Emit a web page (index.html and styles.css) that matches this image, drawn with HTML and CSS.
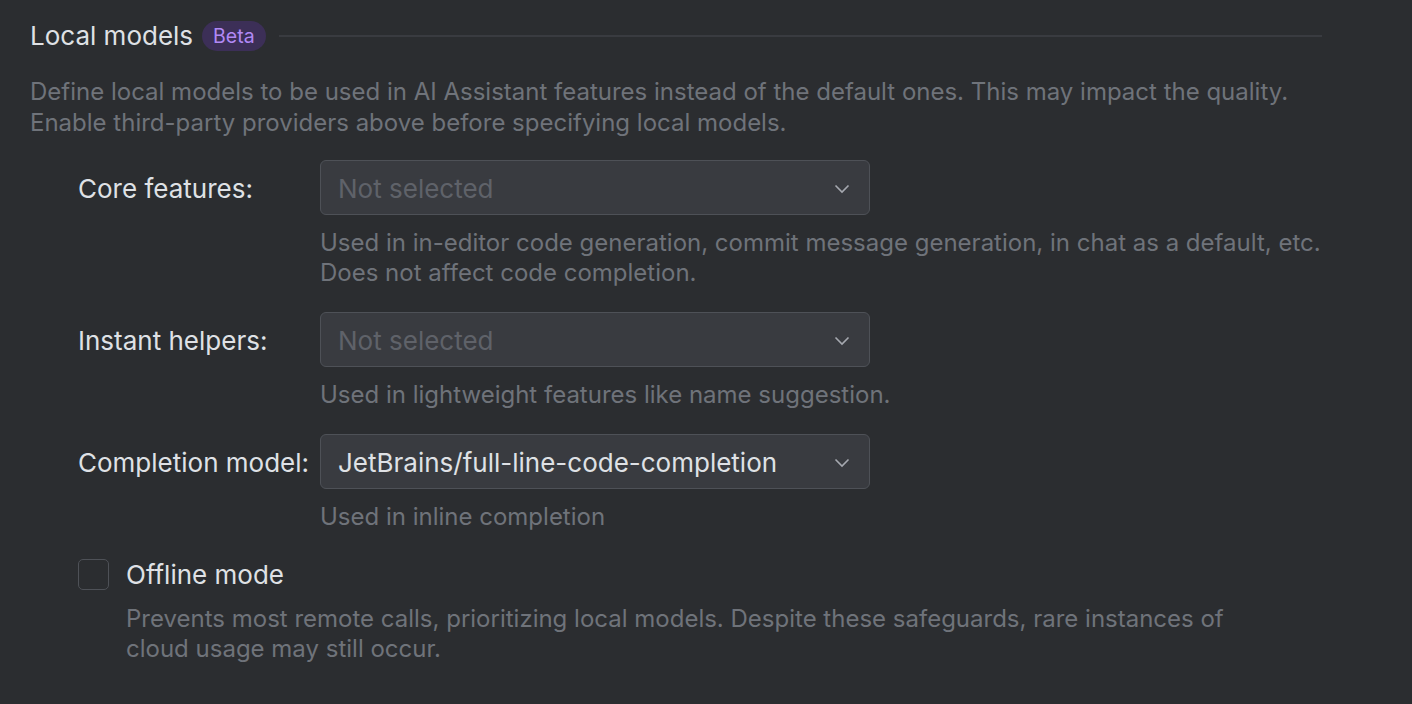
FILE: index.html
```html
<!DOCTYPE html>
<html>
<head>
<meta charset="utf-8">
<link rel="stylesheet" href="styles.css">
</head>
<body>
<div class="page">
  <div class="section-header">
    <span class="section-title">Local models</span>
    <span class="badge">Beta</span>
    <span class="separator"></span>
  </div>
  <p class="section-desc">Define local models to be used in AI Assistant features instead of the default ones. This may impact the quality.<br>Enable third-party providers above before specifying local models.</p>

  <div class="form">
    <div class="row">
      <label class="label">Core features:</label>
      <div class="combo placeholder">
        <span class="combo-text">Not selected</span>
        <svg class="chevron" width="16" height="10" viewBox="0 0 16 10"><path d="M1.5 1.5 L8 8 L14.5 1.5" fill="none" stroke="#a6a9b0" stroke-width="1.6"/></svg>
      </div>
    </div>
    <p class="help">Used in in-editor code generation, commit message generation, in chat as a default, etc.<br>Does not affect code completion.</p>

    <div class="row">
      <label class="label">Instant helpers:</label>
      <div class="combo placeholder">
        <span class="combo-text">Not selected</span>
        <svg class="chevron" width="16" height="10" viewBox="0 0 16 10"><path d="M1.5 1.5 L8 8 L14.5 1.5" fill="none" stroke="#a6a9b0" stroke-width="1.6"/></svg>
      </div>
    </div>
    <p class="help">Used in lightweight features like name suggestion.</p>

    <div class="row">
      <label class="label">Completion model:</label>
      <div class="combo">
        <span class="combo-text">JetBrains/full-line-code-completion</span>
        <svg class="chevron" width="16" height="10" viewBox="0 0 16 10"><path d="M1.5 1.5 L8 8 L14.5 1.5" fill="none" stroke="#a6a9b0" stroke-width="1.6"/></svg>
      </div>
    </div>
    <p class="help">Used in inline completion</p>

    <div class="check-row">
      <span class="checkbox"></span>
      <span class="check-label">Offline mode</span>
    </div>
    <p class="check-help">Prevents most remote calls, prioritizing local models. Despite these safeguards, rare instances of<br>cloud usage may still occur.</p>
  </div>
</div>
</body>
</html>
```

FILE: styles.css
```css
html, body {
  margin: 0;
  padding: 0;
  background: #2b2d30;
}

body {
  width: 1412px;
  height: 704px;
  overflow: hidden;
  font-family: Inter, "Noto Sans", sans-serif;
  color: #dfe1e5;
  box-sizing: border-box;
  border-right: 2px solid #2a2c2f;
}

.page {
  padding: 20px 0 0 30px;
  width: 1292px;
}

.section-header {
  display: flex;
  align-items: center;
  height: 32px;
}

.section-title {
  font-size: 26px;
  color: #dfe1e5;
  line-height: 32px;
}

.badge {
  margin-left: 9px;
  height: 30px;
  padding: 0 11px;
  border-radius: 15px;
  background: #3c2f57;
  color: #b189f5;
  font-size: 19.5px;
  line-height: 30px;
}

.separator {
  flex: 1;
  height: 2px;
  margin-left: 13px;
  background: #393b40;
}

.section-desc {
  margin: 24px 0 0 0;
  font-size: 24px;
  line-height: 31px;
  color: #6f737a;
}

.form {
  padding-left: 48px;
  margin-top: 22px;
}

.row {
  display: flex;
  align-items: center;
}

.label {
  width: 242px;
  padding-top: 3px;
  font-size: 26px;
  line-height: 32px;
  color: #dfe1e5;
}

.combo {
  width: 550px;
  height: 55px;
  box-sizing: border-box;
  border: 1.5px solid #4e5157;
  border-radius: 6px;
  background: #393b40;
  display: flex;
  align-items: center;
  justify-content: space-between;
  padding: 2px 19px 0 17px;
}

.combo-text {
  font-size: 26px;
  color: #dfe1e5;
}

.placeholder .combo-text {
  color: #5f6269;
}

.help {
  margin: 13px 0 24px 242px;
  font-size: 24px;
  line-height: 30px;
  color: #6f737a;
}

.check-row {
  display: flex;
  align-items: center;
  padding-top: 1px;
}

.checkbox {
  width: 31px;
  height: 31px;
  box-sizing: border-box;
  border: 1.5px solid #4e5157;
  border-radius: 5px;
}

.check-label {
  margin-left: 17px;
  padding-top: 2px;
  font-size: 26px;
  line-height: 32px;
  color: #dfe1e5;
}

.check-help {
  margin: 13px 0 0 48px;
  font-size: 24px;
  line-height: 30px;
  color: #6f737a;
}
```
